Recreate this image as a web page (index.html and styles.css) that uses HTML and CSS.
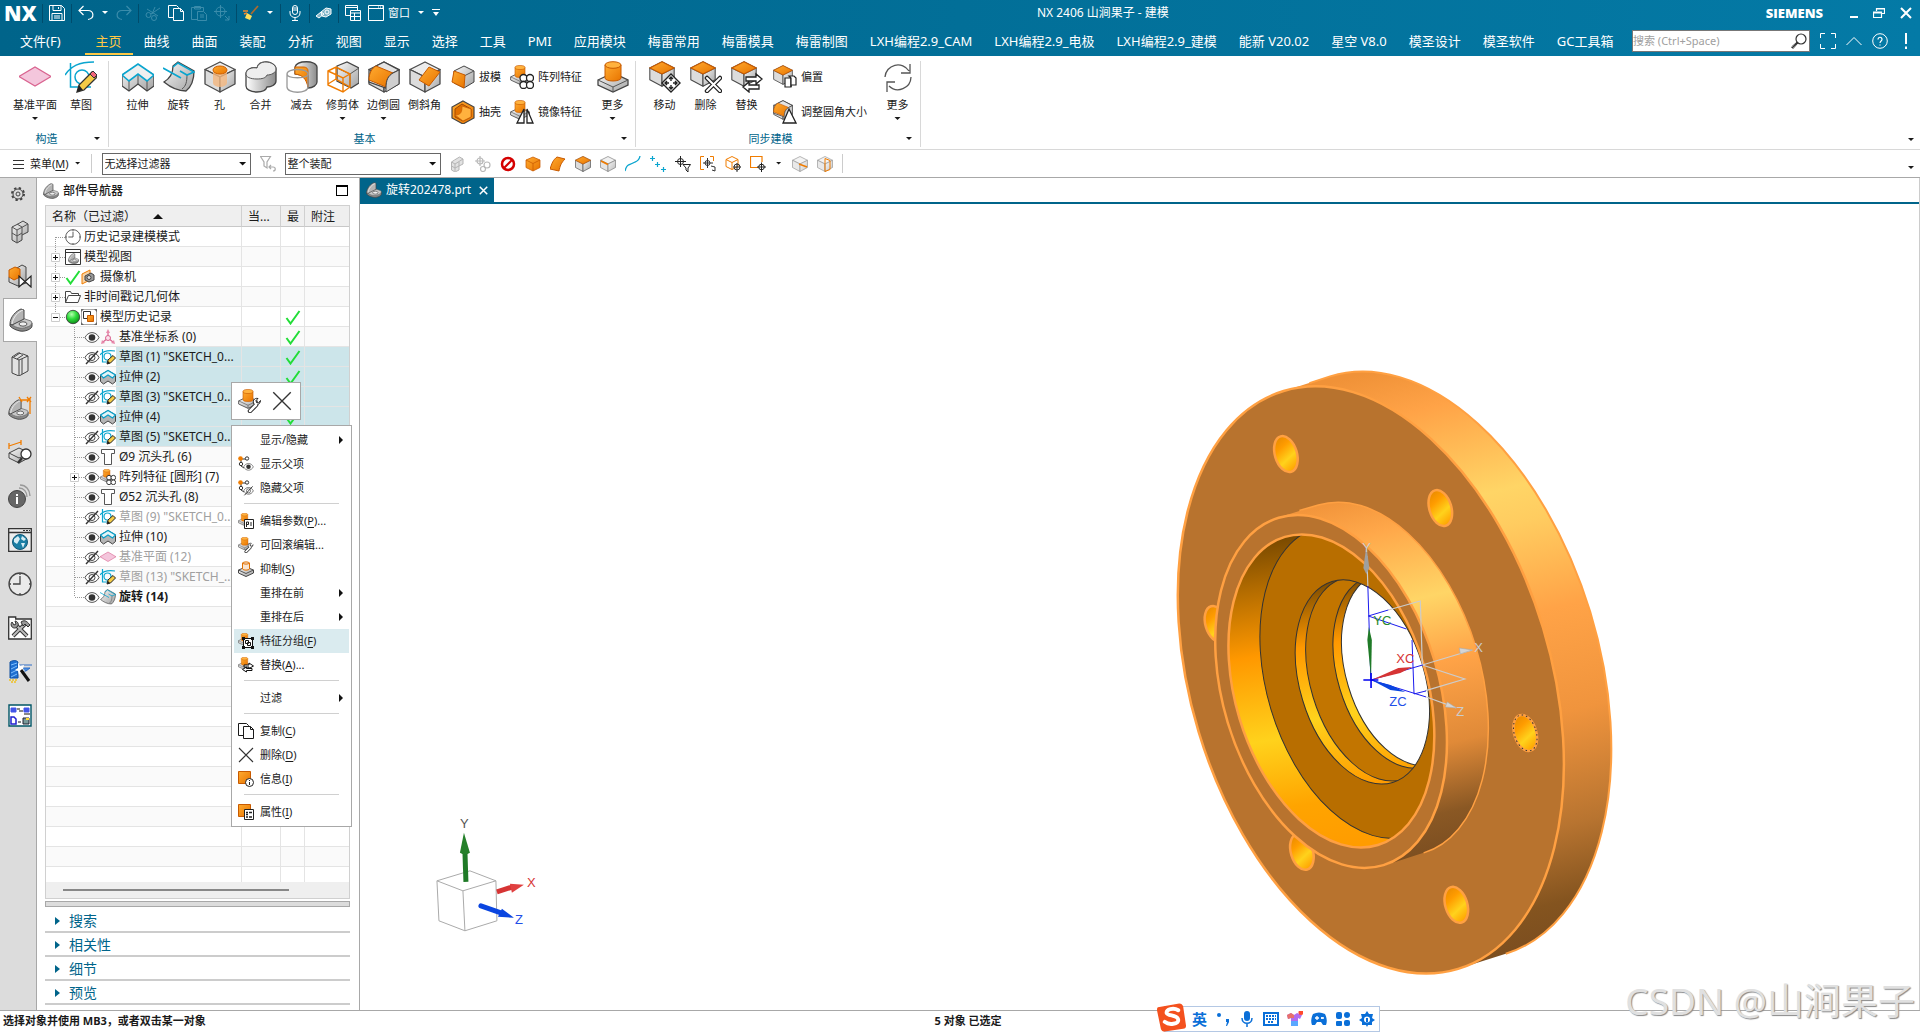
FILE: index.html
```html
<!DOCTYPE html>
<html lang="zh-CN">
<head>
<meta charset="UTF-8">
<meta name="viewport" content="width=device-width, initial-scale=1.0">
<title>NX 2406 山涧果子 - 建模</title>
<link rel="stylesheet" href="styles.css">
</head>
<body>

<!-- icon sprite -->
<svg class="sprite" aria-hidden="true">
  <defs>
    <linearGradient id="og" x1="0" y1="0" x2="1" y2="1"><stop offset="0" stop-color="#ffab30"/><stop offset="1" stop-color="#e87400"/></linearGradient>
    <linearGradient id="gg" x1="0" y1="0" x2="1" y2="1"><stop offset="0" stop-color="#f8f8f8"/><stop offset="1" stop-color="#a2a2a2"/></linearGradient>
    <linearGradient id="gd" x1="0" y1="0" x2="1" y2="0"><stop offset="0" stop-color="#fff"/><stop offset="1" stop-color="#8c8c8c"/></linearGradient>
    <radialGradient id="ball" cx=".4" cy=".3" r=".7"><stop offset="0" stop-color="#b6ffb0"/><stop offset=".5" stop-color="#2fdc3c"/><stop offset="1" stop-color="#10901c"/></radialGradient>

    <!-- basic bodies -->
    <symbol id="cube" viewBox="0 0 32 32"><g stroke="#4a4a4a" stroke-width="1.3" stroke-linejoin="round"><path d="M16 1l15 7.5L16 16 1 8.500z" fill="#ececec"/><path d="M1 8.500L16 16v15L1 23z" fill="#dcdcdc"/><path d="M31 8.500L16 16v15l15-8z" fill="url(#gg)"/></g></symbol>
    <symbol id="cube-top" viewBox="0 0 32 32"><use href="#cube"/><path d="M16 1l15 7.500L16 16 1 8.500z" fill="url(#og)" stroke="#c85a00" stroke-width="1.300"/></symbol>
    <symbol id="cube-orange" viewBox="0 0 32 32"><path d="M16 2l14 6v15l-14 7-14-7V8z" fill="url(#og)" stroke="#c85a00" stroke-width="1.5"/><path d="M2 8l14 7 14-7M16 15v15" fill="none" stroke="#c85a00" stroke-width="1.500"/></symbol>
    <symbol id="boss" viewBox="0 0 32 32"><path d="M1 19l15-7 15 7v5l-15 7-15-7z" fill="url(#gg)" stroke="#444" stroke-width="1.300"/><path d="M1 19l15 7 15-7M16 26v5" fill="none" stroke="#555"/><path d="M8 4v13a8 3 0 0 0 16 0V4z" fill="url(#og)" stroke="#c85a00"/><ellipse cx="16" cy="4" rx="8" ry="3.300" fill="#ffb23e" stroke="#c85a00"/></symbol>
    <symbol id="bracket" viewBox="0 0 24 24"><path d="M1 16l12-5 10 4v3c0 3-7 6-12 5-4-1-7-2-10-5z" fill="#8a8a8a" stroke="#444"/><path d="M1 15l12-5 9 3c2 2 0 5-4 6-6 3-13 0-17-4z" fill="#c9c9c9" stroke="#666" stroke-width=".8"/><path d="M1 16C1 9 7 3 12 1l3 1v9L3 17z" fill="#b4b4b4" stroke="#444"/><path d="M3 16C4 9 9 4 14 2" fill="none" stroke="#eee"/><ellipse cx="14" cy="16" rx="4" ry="2.200" fill="#eee" stroke="#555"/></symbol>

    <!-- ribbon -->
    <symbol id="plane" viewBox="0 0 32 32"><path d="M0 15.500L16 6l16 9.500L16 25z" fill="#f4c6dc" stroke="#d9638f" stroke-width="1.200"/></symbol>
    <symbol id="sketch" viewBox="0 0 32 32"><g fill="none" stroke="#0aa5cf" stroke-width="1.500"><path d="M0 14C6 5 14 1 29 1M5.500 2v24H26"/><circle cx="17" cy="16" r="7"/></g><path d="M12 31l2-7L27 11l5 5-13 13z" fill="#f5cb45" stroke="#333" stroke-width="1.300"/><path d="M25 13l3-3 4 4-3 3z" fill="#f3667a" stroke="#333"/><path d="M12 31l2-7 4 5z" fill="#222"/></symbol>
    <symbol id="sketch-s" viewBox="0 0 16 16"><path d="M0 6C3 2 8 1 15 2M2.500 0v13H8" fill="none" stroke="#0aa5cf" stroke-width="1.200"/><circle cx="7.500" cy="7.500" r="3.500" fill="none" stroke="#0aa5cf" stroke-width="1.200"/><path d="M7 15l1-4 5-4.500 2.500 2.500-5 5z" fill="#f5cb45" stroke="#222"/><path d="M7 15l1-3 2 2z" fill="#222"/></symbol>
    <symbol id="extrude" viewBox="0 0 32 32"><path d="M0 14L16 4l16 10v11l-7 5-9-7-9 7-7-5z" fill="url(#gg)" stroke="#444" stroke-width="1.300"/><path d="M7 20v9M16 13v10M25 20v9" stroke="#555"/><path d="M0 14L16 3l16 11-7 6-9-7-9 7z" fill="#efefef" stroke="#0aa5cf" stroke-width="1.600"/></symbol>
    <symbol id="extrude-s" viewBox="0 0 16 16"><path d="M.5 6L8 1.500 15.500 6v6.500l-3 2.500L8 12l-4.500 3-3-2.500z" fill="#b5b5b5" stroke="#444"/><path d="M.5 6L8 1.500 15.500 6l-3 3L8 6 3.500 9z" fill="#e4f4f8" stroke="#0a9fc8" stroke-width="1.200"/></symbol>
    <symbol id="revolve" viewBox="0 0 32 32"><path d="M10 5l5-4 16 9c0 9-3 16-8 20-8 0-16-4-22-9 5-3 9-8 9-16z" fill="url(#gg)" stroke="#444" stroke-width="1.300"/><path d="M24 13c0 8-1 12-5 15" fill="none" stroke="#555"/><path d="M0 7l18 10M10 6l5-4 16 9-7 3-7-4" fill="none" stroke="#0aa5cf" stroke-width="1.600"/></symbol>
    <symbol id="hole" viewBox="0 0 32 32"><use href="#cube"/><path d="M9 9v13a7 4 0 0 0 14 0V9z" fill="#f4b67e" fill-opacity=".8"/><ellipse cx="16" cy="9" rx="7" ry="4" fill="url(#og)" stroke="#d06000"/></symbol>
    <symbol id="unite" viewBox="0 0 32 32"><path d="M1 13c0-5 6-7 11-6 1-4 4-6 9-6s10 3 10 7v12c0 4-5 6-9 6-1 3-5 5-10 5-7 0-11-3-11-6z" fill="url(#gd)" stroke="#444" stroke-width="1.300"/><path d="M1 13c0-5 6-7 11-6 1-4 4-6 9-6s10 3 10 7-5 6-9 6c-1 3-5 4-10 4-7 0-11-2-11-5z" fill="#eee" stroke="#555"/></symbol>
    <symbol id="subtract" viewBox="0 0 32 32"><path d="M9 6c2-7 21-7 22 0v15c0 3-4 6-9 6V15L9 13z" fill="url(#gd)" stroke="#444" stroke-width="1.300"/><path d="M9 6h8c4 0 5 2 5 4v16c-2-8-5-12-13-13z" fill="url(#og)" stroke="#d06000"/><path d="M1 13c0-6 21-6 21 0v13c0 7-21 7-21 0zc0 5 21 5 21 0" fill="none" stroke="#999" stroke-width="1.300"/></symbol>
    <symbol id="trim" viewBox="0 0 32 32"><path d="M10 5l10-4 12 6v15l-8 5-14-7z" fill="url(#gg)" stroke="#444" stroke-width="1.300"/><path d="M10 7l13 6 9-6M23 13v14" fill="none" stroke="#555"/><path d="M1 10l8-4 14 7v13l-7 5-15-7zl15 7 7-4M16 17v14M9 6v12l14 8M9 18l-8 5" fill="none" stroke="#f07c00" stroke-width="1.400"/></symbol>
    <symbol id="blend" viewBox="0 0 32 32"><use href="#cube"/><path d="M1 21c0-9 3-14 7-16l8-4 15 8-6 3c-6 3-7 8-7 15z" fill="#e4e4e4" stroke="#444" stroke-width="1.300"/><path d="M1 19C1 12 4 7 8 5l17 7c-5 3-7 7-7 14z" fill="url(#og)" stroke="#c85a00"/><path d="M18 27c0-8 2-12 7-15l6-3v14l-13 8z" fill="#cfcfcf" stroke="#444"/></symbol>
    <symbol id="chamfer" viewBox="0 0 32 32"><use href="#cube"/><path d="M20 6l11 5-11 14-10-6z" fill="url(#og)" stroke="#c85a00"/></symbol>
    <symbol id="draft" viewBox="0 0 24 24"><path d="M3 6l10-5 10 5v11l-10 6-10-5z" fill="url(#gg)" stroke="#444"/><path d="M13 11l10-5" stroke="#555"/><path d="M3 6l11 4-1 13-12-6z" fill="url(#og)" stroke="#c85a00"/></symbol>
    <symbol id="shell" viewBox="0 0 24 24"><path d="M12 1l11 6v11l-11 6-11-6V7z" fill="url(#og)" stroke="#444" stroke-width="1.200"/><path d="M4 9l7-5 9 5v8l-8 4-8-4z" fill="#e07000" stroke="#a04a00"/><path d="M4 15c6 0 7-3 7-9l9 3v8l-8 4z" fill="#ffb23e" stroke="#c85a00" stroke-width=".7"/></symbol>
    <symbol id="pattern" viewBox="0 0 24 24"><use href="#boss" x="0" y="0" width="20" height="20"/><g fill="#fff" stroke="#222" stroke-width="1.300"><circle cx="13.500" cy="13" r="3.500"/><circle cx="20" cy="13" r="3.500"/><circle cx="13.500" cy="20" r="3.500"/><circle cx="20" cy="20" r="3.500"/></g></symbol>
    <symbol id="mirror" viewBox="0 0 24 24"><use href="#boss" x="0" y="0" width="20" height="20"/><path d="M14 9v14H7zM17 9v14h6z" fill="#fff" stroke="#222" stroke-width="1.300"/></symbol>
    <symbol id="move" viewBox="0 0 32 32"><use href="#cube-top" width="26" height="26"/><path d="M22 13l9 9-9 9-9-9z" fill="#fff" stroke="#222" stroke-width="1.400"/><path d="M22 16v4M22 24v4M16 22h4M24 22h4M20 18l2-2 2 2M20 26l2 2 2-2M18 20l-2 2 2 2M26 20l2 2-2 2" fill="none" stroke="#222" stroke-width="1.400"/></symbol>
    <symbol id="delete" viewBox="0 0 32 32"><use href="#cube-top" width="26" height="26"/><path d="M17 17l13 13M30 17L17 30" stroke="#222" stroke-width="4.500" stroke-linecap="round"/><path d="M17 17l13 13M30 17L17 30" stroke="#fff" stroke-width="2" stroke-linecap="round"/></symbol>
    <symbol id="replace" viewBox="0 0 32 32"><use href="#cube-top" width="26" height="26"/><path d="M15 16h10v-3l6 5-6 5v-3H15zM28 24H18v-3l-6 5 6 5v-3h10z" fill="#fff" stroke="#222" stroke-width="1.300"/></symbol>
    <symbol id="offset" viewBox="0 0 24 24"><use href="#cube-top" width="20" height="20"/><path d="M12 13h6v9h-6z" fill="#fff" stroke="#222" stroke-width="1.200"/><path d="M18 22V13l-2-2h5l2 2v7h-5" fill="#fff" stroke="#222" stroke-width="1.200"/></symbol>
    <symbol id="resize" viewBox="0 0 24 24"><use href="#blend" width="20" height="20"/><path d="M16 9l7 14H10z" fill="#fff" stroke="#222" stroke-width="1.300"/></symbol>
    <symbol id="refresh" viewBox="0 0 32 32"><path d="M3 16A13 13 0 0 1 27 10M29 16A13 13 0 0 1 7 25M28 3v9h-9M5 31v-10h8" fill="none" stroke="#555" stroke-width="1.300"/></symbol>

    <!-- title bar -->
    <symbol id="save" viewBox="0 0 16 16"><path d="M.5.5h12l3 3v12H.5zM4 .5v5h8v-5M9.500 2v2M3 15.500v-7h10v7M5 11h6M5 13h6" fill="none" stroke="currentColor"/></symbol>
    <symbol id="undo" viewBox="0 0 16 16"><path d="M5.500 1L1 5.500 5.500 10M1 5.500h9c6 0 7 8 0 9" fill="none" stroke="currentColor" stroke-width="1.200"/></symbol>
    <symbol id="cut" viewBox="0 0 16 16"><g fill="none" stroke="currentColor"><path d="M2 4l11 7M15 3L6 9M10 2L7 9"/><circle cx="3.500" cy="10" r="2.500"/><circle cx="9" cy="13" r="2.500"/></g></symbol>
    <symbol id="copy" viewBox="0 0 16 16"><path d="M5.500 12.500h-5V.5h8l2 2v1M5.500 3.500h7l3 3v9h-10zM12.500 3.500v3h3" fill="none" stroke="currentColor"/></symbol>
    <symbol id="paste" viewBox="0 0 16 16"><path d="M6 14.500H.5v-12h12V6M3.500 4V1.500h6V4zM6.500 6.500h6l3 3v6h-9zM9 10h4M9 12h4" fill="none" stroke="currentColor"/></symbol>
    <symbol id="target" viewBox="0 0 16 16"><path d="M6.500 0v13M0 6.500h13M11 11l4 4M15 11v4h-4" fill="none" stroke="currentColor"/><circle cx="6.500" cy="6.500" r="4.500" fill="none" stroke="currentColor"/></symbol>
    <symbol id="brush" viewBox="0 0 16 16"><path d="M15 1L8 9" stroke="#b06a2c" stroke-width="1.600"/><path d="M4 8l5 3-2 4-5-2z" fill="#ffdf5a"/><path d="M0 6h5M1 9l3-1" stroke="#f28a2e" stroke-width="1.500"/></symbol>
    <symbol id="mic" viewBox="0 0 16 16"><rect x="5.500" y=".5" width="5" height="9" rx="2.500" fill="none" stroke="currentColor"/><path d="M3 6v2c0 6 10 6 10 0V6M8 12.500V15M5 15.500h6M6 3h4M6 5h4" fill="none" stroke="currentColor"/></symbol>
    <symbol id="touch" viewBox="0 0 16 16"><path d="M0 11l5-4 3 2-5 4zM5 7l5-4 5 1v5l-5 3-4-1z" fill="#fff" fill-opacity=".5" stroke="#fff"/><circle cx="11" cy="7" r="2" fill="none" stroke="#fff"/></symbol>
    <symbol id="windows" viewBox="0 0 16 16"><path d="M5 10.500H.5V.5h12V5M.5 2.500h12M5.500 5.500h10v10h-10zM5.500 8h10M9.500 8v7M5.500 11.500h10" fill="none" stroke="currentColor"/></symbol>
    <symbol id="window" viewBox="0 0 16 16"><path d="M.5.5h15v15H.5zM.5 3.500h15" fill="none" stroke="currentColor"/><path d="M10 2h1M12 2h1M14 2h1" stroke="currentColor"/></symbol>
    <symbol id="expand" viewBox="0 0 16 16"><path d="M.5 5V.5H5M11 .5h4.500V5M15.500 11v4.500H11M5 15.500H.5V11" fill="none" stroke="currentColor"/></symbol>
    <symbol id="up" viewBox="0 0 16 16"><path d="M.5 12L8 4.500l7.500 7.500" fill="none" stroke="currentColor"/></symbol>
    <symbol id="help" viewBox="0 0 16 16"><circle cx="8" cy="8" r="7.300" fill="none" stroke="currentColor"/><path d="M6 6.500c0-3 4-3 4 0 0 1.500-2 1.500-2 3.500M8 11.500v1" fill="none" stroke="currentColor" stroke-width="1.200"/></symbol>
    <symbol id="alert" viewBox="0 0 16 16"><path d="M7 0h2v11H7zM7 13.500h2v2.500H7z" fill="currentColor"/></symbol>
    <symbol id="lens" viewBox="0 0 16 16"><circle cx="10" cy="6" r="5" fill="none" stroke="#333" stroke-width="1.200"/><path d="M6.500 9.500L1 15M7 10l-5 5.500-1.500-1.500L6 9" fill="none" stroke="#333"/></symbol>
    <symbol id="restore" viewBox="0 0 12 12"><path d="M3.500 4V1.500h8v5H9M.5 5h8v5.500h-8zM.5 6h8M3.500 2h8" fill="none" stroke="currentColor" stroke-width="1.200"/></symbol>
    <symbol id="close" viewBox="0 0 12 12"><path d="M1 1l10 10M11 1L1 11" stroke="currentColor" stroke-width="2"/></symbol>

    <!-- selection bar -->
    <symbol id="burger" viewBox="0 0 12 12"><path d="M0 2.500h11M0 6.500h11M0 10.500h11" stroke="#333"/></symbol>
    <symbol id="funnel" viewBox="0 0 16 16"><path d="M.5.5h10L7 6v6l-3-2V6zM9 11h4c3 0 3 4 0 4M11 9l-2 2 2 2" fill="none" stroke="#aaa" stroke-width="1.200"/></symbol>
    <symbol id="blocks" viewBox="0 0 16 16"><path d="M1.500 6l3-2 5-3 3.500 2v5l-4 2v4l-4 2-3.500-2z" fill="#e2e2e2" stroke="#b4b4b4"/><path d="M1.500 6L5 8l8-5M5 8v7M9 6v4M1.500 10L5 12l4-2" fill="none" stroke="#b4b4b4"/></symbol>
    <symbol id="link" viewBox="0 0 16 16"><g fill="none" stroke="#b8b8b8" stroke-width="1.200"><circle cx="5" cy="5" r="3"/><path d="M5 0v10M0 5h10"/><circle cx="12" cy="9" r="3"/><circle cx="8" cy="13" r="2.500"/></g></symbol>
    <symbol id="ban" viewBox="0 0 16 16"><circle cx="8" cy="8" r="6" fill="#fff" stroke="#d40000" stroke-width="2.500"/><path d="M4 12l8-8" stroke="#d40000" stroke-width="2"/></symbol>
    <symbol id="face" viewBox="0 0 16 16"><path d="M0 13C2 7 3 4 7 1l8 2c-4 4-5 7-6 12z" fill="url(#og)" stroke="#c85a00"/></symbol>
    <symbol id="edge" viewBox="0 0 16 16"><use href="#cube" opacity=".75"/><path d="M1 5l7 3.500" stroke="#f07c00" stroke-width="1.800"/></symbol>
    <symbol id="curve" viewBox="0 0 16 16"><path d="M0 15c2-8 5-6 8-8s6-1 7-7" fill="none" stroke="#0aa5cf" stroke-width="1.300"/></symbol>
    <symbol id="points" viewBox="0 0 16 16"><path d="M0 2.500h5M2.500 0v5M5 8.500h5M7.500 6v5M11 13.500h5M13.500 11v5" stroke="#0aa5cf" stroke-width="1.200"/></symbol>
    <symbol id="cross-funnel" viewBox="0 0 16 16"><path d="M5.500 0v11M0 5.500h11" stroke="#222"/><circle cx="5.500" cy="5.500" r="3" fill="none" stroke="#222"/><path d="M8 8.500h7.500L13 12v4l-2-2v-2z" fill="#fff" stroke="#222"/></symbol>
    <symbol id="cross-box" viewBox="0 0 16 16"><path d="M4 .5H.5v13H4M10 .5h3.500V5" fill="none" stroke="#f07c00"/><path d="M7.500 2v10M3 7h10M11 10l4 1v4l-3-1" fill="none" stroke="#333"/><circle cx="7.500" cy="7" r="2.500" fill="none" stroke="#333"/></symbol>
    <symbol id="cube-cross" viewBox="0 0 16 16"><path d="M1 3.500L7 .5l6 3v7l-6 3-6-3zl6 3 6-3M7 6.500v7" fill="none" stroke="#f07c00"/><circle cx="12" cy="11" r="3" fill="none" stroke="#333"/><path d="M12 7v9M8 11h8" stroke="#333"/></symbol>
    <symbol id="box-cross" viewBox="0 0 16 16"><path d="M12 6V.5H.5v11H8" fill="none" stroke="#f07c00" stroke-width="1.200"/><circle cx="11.500" cy="11" r="2.800" fill="none" stroke="#222"/><path d="M11.500 6.500V16M7 11h9" stroke="#222"/></symbol>
    <symbol id="cube-line" viewBox="0 0 16 16"><use href="#cube" opacity=".6"/><path d="M7 8l8 3" stroke="#f07c00" stroke-width="1.500"/></symbol>
    <symbol id="cube-cut" viewBox="0 0 16 16"><use href="#cube" opacity=".6"/><path d="M8 2.500l5 2v9l-5 2z" fill="none" stroke="#f07c00"/></symbol>

    <!-- resource bar -->
    <symbol id="gear" viewBox="0 0 24 24"><circle cx="12" cy="12" r="9" fill="none" stroke="#444" stroke-width="3" stroke-dasharray="3.500 3.570"/><circle cx="12" cy="12" r="7.500" fill="#dcdcdc" stroke="#444" stroke-width="1.500"/><circle cx="12" cy="12" r="3" fill="none" stroke="#444" stroke-width="1.500"/></symbol>
    <symbol id="asm" viewBox="0 0 24 24"><path d="M4 7l6-3 5-3 5 3v8l-6 3v5l-5 3-5-3z" fill="url(#gg)" stroke="#444"/><path d="M4 7l5 3 11-6M9 10v12M9 4l5 3v8M4 13l5 3 5-3" fill="none" stroke="#555"/></symbol>
    <symbol id="constraint" viewBox="0 0 24 24"><path d="M9 4l5-3 4 2v16l-8 3-9-4v-5z" fill="url(#gg)" stroke="#444"/><path d="M1 6l6-3 5 2v8l-6 3-5-3z" fill="url(#og)" stroke="#c85a00"/><path d="M11 12v11l12-11v11z" fill="#fff" stroke="#222" stroke-width="1.200"/></symbol>
    <symbol id="books" viewBox="0 0 24 24"><path d="M4 5l6-4h2l1 1h2l5 2v15l-9 5-7-3z" fill="#e2e2e2" stroke="#444"/><path d="M4 5l7 3 9-4M11 8v16M6 5l6-4M9 7l6-4M14 7v15" fill="none" stroke="#444"/></symbol>
    <symbol id="pmi" viewBox="0 0 24 24"><use href="#bracket" x="0" y="3" width="21" height="21"/><path d="M22 18V2M11 1l3 5M12 4l9 0M19 1l4 5M23 1l-4 5" fill="none" stroke="#f07c00" stroke-width="1.300"/></symbol>
    <symbol id="inspect" viewBox="0 0 24 24"><path d="M1 13l10-5 11 5v4l-11 6-10-5z" fill="url(#gg)" stroke="#444"/><path d="M1 13l10 5 11-5" fill="none" stroke="#444"/><path d="M1 9V3M1 6l12-4M13 5V0" stroke="#f07c00" stroke-width="1.300"/><path d="M14 18l-4 5" stroke="#333" stroke-width="2.500"/><circle cx="18" cy="14" r="5" fill="#fff" stroke="#333" stroke-width="1.300"/></symbol>
    <symbol id="info" viewBox="0 0 24 24"><circle cx="9" cy="15" r="8.500" fill="#666" stroke="#444"/><path d="M9 10v2M9 13v7" stroke="#fff" stroke-width="2"/><path d="M11 4c5 0 8 4 8 9M12 1c6 0 10 5 10 11" fill="none" stroke="#999" stroke-width="1.400"/></symbol>
    <symbol id="web" viewBox="0 0 24 24"><path d="M.7.700h22.600v22.600H.7zM.7 4.500h22.600" fill="#eee" stroke="#333" stroke-width="1.300"/><path d="M15 2.500h2M18 2.500h2M21 2.500h1" stroke="#333"/><circle cx="12" cy="14" r="7.500" fill="#1b7fa5" stroke="#145a78"/><path d="M6 11l4-3 2 3-3 5-3-2zM14 8l4 3-2 2-3-2zM13 15l4 0-2 5z" fill="#d8eef5"/></symbol>
    <symbol id="clock" viewBox="0 0 24 24"><circle cx="12" cy="12" r="11" fill="#fff" fill-opacity=".4" stroke="#444" stroke-width="1.300"/><path d="M12 4v8H5M12 1v2M12 21v2M1 12h2M21 12h2" fill="none" stroke="#444" stroke-width="1.300"/></symbol>
    <symbol id="tools" viewBox="0 0 24 24"><path d="M.7 1h7v2h15.600v20H.7z" fill="#fff" stroke="#333" stroke-width="1.300"/><path d="M5 20L17 8M8 9l11 11" stroke="#333" stroke-width="4"/><path d="M5 20L17 8M8 9l11 11" stroke="#bbb" stroke-width="2"/><path d="M4 6c-3 4 2 8 5 5s0-6-2-6l1 3-2 1z" fill="#999" stroke="#333"/><path d="M13 6c3-2 5-2 9 3l-2 2-3-3-2 2z" fill="#999" stroke="#333"/></symbol>
    <symbol id="mold" viewBox="0 0 24 24"><path d="M2 2c3-2 6-2 8 0v16H2z" fill="#1f6fd0" stroke="#0f4f9f"/><path d="M3 5l6-2M3 9l6-3M3 13l6-3M3 17l6-3" stroke="#7fc0ff"/><path d="M10 5h14M10 8h12l-4 3h-5z" fill="#4c8fe0" stroke="#2f6fc8"/><path d="M10 2l2 4 4-1-1 4 2 2-4 1-2 3-1-4-3-1 3-2z" fill="#fff"/><path d="M13 10l8 11" stroke="#111" stroke-width="3"/><path d="M1 20h9M3 22h6" stroke="#f0c020" stroke-width="1.500" stroke-dasharray="2 1"/></symbol>
    <symbol id="flow" viewBox="0 0 24 24"><path d="M1 1h22v21H1z" fill="#fff" stroke="#056" stroke-width="1.400"/><path d="M3 4h5v4H3zM16 4h5v4h-5z" fill="#4355e8" stroke="#4355e8"/><path d="M9 5h3M11 7h4M16 10h6M10 18h3" stroke="#111" stroke-width="1.200"/><path d="M3 13h3l2 2v5H3z" fill="#fff" stroke="#2020d0" stroke-width="1.500"/><path d="M15 14h6v6h-6z" fill="#7a9a9a" stroke="#223"/><path d="M18 14h3v2h-3z" fill="#fd3"/></symbol>

    <!-- tree -->
    <symbol id="br-mid" viewBox="0 0 19 20"><path d="M9.500 0v20M10 10.500h9" fill="none" stroke="#999" stroke-dasharray="1 1"/></symbol>
    <symbol id="br-start" viewBox="0 0 19 20"><path d="M9.500 10v10M10 10.500h9" fill="none" stroke="#999" stroke-dasharray="1 1"/></symbol>
    <symbol id="br-end" viewBox="0 0 19 20"><path d="M9.500 0v10M10 10.500h9" fill="none" stroke="#999" stroke-dasharray="1 1"/></symbol>
    <symbol id="br-plus" viewBox="0 0 19 20"><use href="#br-mid"/><path d="M5.500 6.500h8v8h-8z" fill="#fff" stroke="#ccc"/><path d="M7 10.500h5M9.500 8v5" stroke="#111"/></symbol>
    <symbol id="br-minus" viewBox="0 0 19 20"><use href="#br-end"/><path d="M5.500 6.500h8v8h-8z" fill="#fff" stroke="#ccc"/><path d="M7 10.500h5" stroke="#111"/></symbol>
    <symbol id="view" viewBox="0 0 16 16"><path d="M.5.500h15v15H.5zM.5 3.500h15" fill="#fff" stroke="#333"/><use href="#bracket" x="3" y="4" width="11" height="11"/></symbol>
    <symbol id="tick" viewBox="0 0 16 16"><path d="M1.500 9l4 5.500L14.500 2" fill="none" stroke="#22dd38" stroke-width="2"/></symbol>
    <symbol id="camera" viewBox="0 0 16 16"><path d="M1 5l8-4v10l-8 4z" fill="#f6d2a4" stroke="#f07c00"/><path d="M4 7l6-3 3 2v5l-5 2-4-2z" fill="#999" stroke="#444"/><circle cx="8" cy="8.500" r="2" fill="#ddd" stroke="#444"/></symbol>
    <symbol id="folder" viewBox="0 0 16 16"><path d="M.5 13.500v-11h5l1 2h7v2M.5 13.500l3-7h12l-2.500 7z" fill="#fff" stroke="#444"/></symbol>
    <symbol id="green" viewBox="0 0 16 16"><circle cx="8" cy="8" r="6.700" fill="url(#ball)" stroke="#333" stroke-width=".8"/></symbol>
    <symbol id="history" viewBox="0 0 16 16"><path d="M.5.500h15v15H.5z" fill="#fff" stroke="#aaa"/><path d="M0 0h3L0 3zM16 0v3l-3-3zM0 16v-3l3 3zM16 16h-3l3-3z" fill="#666"/><path d="M2.500 2.500h7v7h-7z" fill="#fff" stroke="#333"/><path d="M6.500 6.500h6v6h-6z" fill="url(#og)" stroke="#c85a00"/></symbol>
    <symbol id="eye" viewBox="0 0 16 16"><path d="M1 8.500c3-6.500 11-6.500 14 0-3 6.500-11 6.500-14 0z" fill="#fff" stroke="#555"/><circle cx="8" cy="8.500" r="3.300" fill="#333"/></symbol>
    <symbol id="eye-off" viewBox="0 0 16 16"><path d="M1 8.500c3-6.500 11-6.500 14 0-3 6.500-11 6.500-14 0z" fill="#fff" stroke="#444"/><circle cx="8" cy="8.500" r="3" fill="#fff" stroke="#444"/><path d="M2 15L14 2" stroke="#333" stroke-width="1.400"/></symbol>
    <symbol id="csys" viewBox="0 0 16 16"><path d="M8 2v7M8 9l-5 4M8 9l5 4" stroke="#d9638f" stroke-width="1.200"/><path d="M8 0l2 4H6zM1 15l1-4 3 3zM15 15l-1-4-3 3z" fill="#e88aac"/><circle cx="8" cy="9" r="2.500" fill="#fbe1eb" stroke="#d9638f"/></symbol>
    <symbol id="cbore" viewBox="0 0 16 16"><path d="M1.500.500h13v4h-3v11h-7v-11h-3z" fill="#fff" stroke="#555"/></symbol>

    <!-- context menu -->
    <symbol id="edit" viewBox="0 0 24 24"><use href="#boss" width="20" height="20"/><path d="M12 22l6-6" stroke="#222" stroke-width="4.500" stroke-linecap="round"/><path d="M22.500 11.500l-2 2.500-2-.5-.5-2 2-2c-4-1-6 3-4 5.500 2 2 6 1 6.500-3.500z" fill="#fff" stroke="#222"/><path d="M12 22l6-6" stroke="#fff" stroke-width="2.500" stroke-linecap="round"/></symbol>
    <symbol id="cross" viewBox="0 0 16 16"><path d="M1 1l14 14M15 1L1 15" stroke="#333" stroke-width="1.100"/></symbol>
    <symbol id="parent" viewBox="0 0 16 16"><g fill="#fff" stroke="#333"><path d="M3 3l5 0M3 3v7l3 2"/><circle cx="9" cy="2.500" r="1.700"/><circle cx="3" cy="8" r="1.700"/></g><circle cx="2.500" cy="2.500" r="2.300" fill="#f07c00"/></symbol>
    <symbol id="show-p" viewBox="0 0 16 16"><use href="#parent"/><use href="#eye" x="5" y="5" width="11" height="11"/></symbol>
    <symbol id="hide-p" viewBox="0 0 16 16"><use href="#parent"/><use href="#eye-off" x="5" y="5" width="11" height="11"/></symbol>
    <symbol id="param" viewBox="0 0 16 16"><use href="#boss" width="13" height="13"/><path d="M6.500 6.500h9v9h-9z" fill="#fff" stroke="#222"/><path d="M8.500 14V9h2v2.500h-2M12 10h2M12 12h2" fill="none" stroke="#222"/></symbol>
    <symbol id="suppress" viewBox="0 0 16 16"><path d="M.5 9L8 6l7.500 3v3L8 15.500.5 12z" fill="url(#gg)" stroke="#444"/><path d="M.5 9L8 12.500 15.500 9" fill="none" stroke="#555"/><path d="M4.500 2v6c1 1.500 6 1.500 7 0V2c-1-1.500-6-1.500-7 0zc1 1.500 6 1.500 7 0" fill="#f8e4d0" stroke="#e07000"/></symbol>
    <symbol id="group" viewBox="0 0 16 16"><use href="#boss" width="13" height="13"/><path d="M5.500 5.500h9v9h-9z" fill="#fff" stroke="#111"/><path d="M7.500 7.500h3v3h-3zM9.500 9.500h3v3h-3z" fill="none" stroke="#111"/><path d="M4 4h3v3H4zM13 4h3v3h-3zM4 13h3v3H4zM13 13h3v3h-3z" fill="#111"/></symbol>
    <symbol id="swap" viewBox="0 0 16 16"><use href="#boss" width="13" height="13"/><path d="M6 8h5V6l4.500 3-4.500 2.500V10H6zM14 13.500H8.500V15L4.500 12.500l4-2.500v1.500H14z" fill="#fff" stroke="#111"/></symbol>
    <symbol id="sheet-info" viewBox="0 0 16 16"><path d="M.5.500h12v12H.5z" fill="url(#og)" stroke="#c85a00"/><circle cx="11.500" cy="11.500" r="4" fill="#fff" stroke="#222"/><path d="M11.500 9v1M11.500 11v3" stroke="#222"/></symbol>
    <symbol id="sheet-list" viewBox="0 0 16 16"><path d="M.5.500h12v12H.5z" fill="url(#og)" stroke="#c85a00"/><path d="M6.500 5.500h9v10h-9z" fill="#fff" stroke="#222"/><path d="M8 8.500h2M11 8.500h3M8 10.500h2M8 13h2M11 13h3" stroke="#222" stroke-width="1.400"/></symbol>
  </defs>
</svg>

<header class="top">
  <div class="titlebar">
    <div class="quick">
      <strong class="logo">NX</strong>
      <i class="sep"></i>
      <button aria-label="保存"><svg><use href="#save"/></svg></button>
      <i class="sep"></i>
      <button aria-label="撤消"><svg><use href="#undo"/></svg></button>
      <i class="caret"></i>
      <button class="off flip" aria-label="重做"><svg><use href="#undo"/></svg></button>
      <i class="sep"></i>
      <button class="off" aria-label="剪切"><svg><use href="#cut"/></svg></button>
      <button aria-label="复制"><svg><use href="#copy"/></svg></button>
      <button class="off" aria-label="粘贴"><svg><use href="#paste"/></svg></button>
      <button class="off" aria-label="定位"><svg><use href="#target"/></svg></button>
      <i class="sep"></i>
      <button aria-label="命令"><svg><use href="#brush"/></svg></button>
      <i class="caret"></i>
      <i class="sep"></i>
      <button aria-label="语音"><svg><use href="#mic"/></svg></button>
      <i class="sep"></i>
      <button aria-label="触控"><svg><use href="#touch"/></svg></button>
      <i class="sep"></i>
      <button aria-label="切换窗口"><svg><use href="#windows"/></svg></button>
      <button class="win"><svg><use href="#window"/></svg>窗口</button>
      <i class="caret"></i>
      <i class="caret bar"></i>
    </div>
    <div class="title">NX 2406 山涧果子 - 建模</div>
    <div class="winctl">
      <b class="brand">SIEMENS</b>
      <button class="min" aria-label="最小化"></button>
      <button aria-label="还原"><svg><use href="#restore"/></svg></button>
      <button aria-label="关闭"><svg><use href="#close"/></svg></button>
    </div>
  </div>

  <nav class="tabs">
    <a href="#" class="file">文件(F)</a>
    <a href="#" class="on">主页</a>
    <a href="#">曲线</a>
    <a href="#">曲面</a>
    <a href="#">装配</a>
    <a href="#">分析</a>
    <a href="#">视图</a>
    <a href="#">显示</a>
    <a href="#">选择</a>
    <a href="#">工具</a>
    <a href="#">PMI</a>
    <a href="#">应用模块</a>
    <a href="#">梅雷常用</a>
    <a href="#">梅雷模具</a>
    <a href="#">梅雷制图</a>
    <a href="#">LXH编程2.9_CAM</a>
    <a href="#">LXH编程2.9_电极</a>
    <a href="#">LXH编程2.9_建模</a>
    <a href="#">能新 V20.02</a>
    <a href="#">星空 V8.0</a>
    <a href="#">模圣设计</a>
    <a href="#">模圣软件</a>
    <a href="#">GC工具箱</a>
    <div class="search">
      <input type="text" placeholder="搜索 (Ctrl+Space)" aria-label="搜索">
      <svg><use href="#lens"/></svg>
    </div>
    <div class="tabtools">
      <button aria-label="全屏"><svg><use href="#expand"/></svg></button>
      <button aria-label="最小化功能区"><svg><use href="#up"/></svg></button>
      <button aria-label="帮助"><svg><use href="#help"/></svg></button>
      <button aria-label="提醒"><svg><use href="#alert"/></svg></button>
    </div>
  </nav>
</header>

<section class="ribbon">
  <div class="group datum">
    <div class="tools">
      <button class="big wide"><svg><use href="#plane"/></svg>基准平面<i class="caret"></i></button>
      <button class="big slim"><svg><use href="#sketch"/></svg>草图</button>
    </div>
    <div class="foot"><span>构造</span><i class="caret"></i></div>
  </div>
  <div class="group">
    <div class="tools">
      <button class="big"><svg><use href="#extrude"/></svg>拉伸</button>
      <button class="big"><svg><use href="#revolve"/></svg>旋转</button>
      <button class="big"><svg><use href="#hole"/></svg>孔</button>
      <button class="big"><svg><use href="#unite"/></svg>合并</button>
      <button class="big"><svg><use href="#subtract"/></svg>减去</button>
      <button class="big"><svg><use href="#trim"/></svg>修剪体<i class="caret"></i></button>
      <button class="big"><svg><use href="#blend"/></svg>边倒圆<i class="caret"></i></button>
      <button class="big"><svg><use href="#chamfer"/></svg>倒斜角</button>
      <div class="stack">
        <button><svg><use href="#draft"/></svg>拔模</button>
        <button><svg><use href="#shell"/></svg>抽壳</button>
      </div>
      <div class="stack">
        <button><svg><use href="#pattern"/></svg>阵列特征</button>
        <button><svg><use href="#mirror"/></svg>镜像特征</button>
      </div>
      <button class="big more"><svg><use href="#boss"/></svg>更多<i class="caret"></i></button>
    </div>
    <div class="foot"><span>基本</span><i class="caret"></i></div>
  </div>
  <div class="group">
    <div class="tools">
      <button class="big"><svg><use href="#move"/></svg>移动</button>
      <button class="big"><svg><use href="#delete"/></svg>删除</button>
      <button class="big"><svg><use href="#replace"/></svg>替换</button>
      <div class="stack">
        <button><svg><use href="#offset"/></svg>偏置</button>
        <button><svg><use href="#resize"/></svg>调整圆角大小</button>
      </div>
      <button class="big more"><svg><use href="#refresh"/></svg>更多<i class="caret"></i></button>
    </div>
    <div class="foot"><span>同步建模</span><i class="caret"></i></div>
  </div>
  <i class="caret last"></i>
</section>

<section class="selbar">
  <button class="menubtn"><svg><use href="#burger"/></svg>菜单(<u>M</u>)<i class="caret"></i></button>
  <i class="sep"></i>
  <label class="combo type"><select aria-label="类型过滤器"><option>无选择过滤器</option></select></label>
  <button aria-label="重置过滤器"><svg><use href="#funnel"/></svg></button>
  <label class="combo scope"><select aria-label="选择范围"><option>整个装配</option></select></label>
  <button aria-label="组件"><svg><use href="#blocks"/></svg></button>
  <button aria-label="关联"><svg><use href="#link"/></svg></button>
  <button aria-label="禁止"><svg><use href="#ban"/></svg></button>
  <button aria-label="体"><svg><use href="#cube-orange"/></svg></button>
  <button aria-label="片体"><svg><use href="#face"/></svg></button>
  <button aria-label="面"><svg><use href="#cube-top"/></svg></button>
  <button aria-label="边"><svg><use href="#edge"/></svg></button>
  <button aria-label="曲线"><svg><use href="#curve"/></svg></button>
  <button aria-label="点"><svg><use href="#points"/></svg></button>
  <button aria-label="捕捉过滤"><svg><use href="#cross-funnel"/></svg></button>
  <button aria-label="框选"><svg><use href="#cross-box"/></svg></button>
  <button aria-label="选择体"><svg><use href="#cube-cross"/></svg></button>
  <button aria-label="矩形选择"><svg><use href="#box-cross"/></svg></button>
  <i class="caret"></i>
  <button aria-label="着色"><svg><use href="#cube-line"/></svg></button>
  <button aria-label="剖切"><svg><use href="#cube-cut"/></svg></button>
  <i class="sep"></i>
  <i class="caret last"></i>
</section>

<main class="workspace">
  <aside class="rail">
    <button class="gear" aria-label="设置"><svg><use href="#gear"/></svg></button>
    <button aria-label="装配导航器"><svg><use href="#asm"/></svg></button>
    <button aria-label="约束导航器"><svg><use href="#constraint"/></svg></button>
    <button class="on" aria-label="部件导航器"><svg><use href="#bracket"/></svg></button>
    <button aria-label="重用库"><svg><use href="#books"/></svg></button>
    <button aria-label="PMI"><svg><use href="#pmi"/></svg></button>
    <button aria-label="检查"><svg><use href="#inspect"/></svg></button>
    <button aria-label="信息"><svg><use href="#info"/></svg></button>
    <button aria-label="浏览器"><svg><use href="#web"/></svg></button>
    <button aria-label="历史记录"><svg><use href="#clock"/></svg></button>
    <button aria-label="工具"><svg><use href="#tools"/></svg></button>
    <button aria-label="模具"><svg><use href="#mold"/></svg></button>
    <button aria-label="流程"><svg><use href="#flow"/></svg></button>
  </aside>

  <section class="navigator">
    <div class="navhead">
      <svg><use href="#bracket"/></svg>
      <h2>部件导航器</h2>
      <button aria-label="最大化"></button>
    </div>
    <div class="treebox">
      <table class="tree">
        <colgroup><col class="c-name"><col class="c-cur"><col class="c-new"><col></colgroup>
        <thead>
          <tr><th><span>名称（已过滤）</span><i class="asc"></i></th><th>当...</th><th>最</th><th>附注</th></tr>
        </thead>
        <tbody>
          <tr><td><div class="node"><svg class="br"><use href="#br-start"/></svg><svg><use href="#clock"/></svg><span>历史记录建模模式</span></div></td><td></td><td></td><td></td></tr>
          <tr><td><div class="node"><svg class="br"><use href="#br-plus"/></svg><svg><use href="#view"/></svg><span>模型视图</span></div></td><td></td><td></td><td></td></tr>
          <tr><td><div class="node"><svg class="br"><use href="#br-plus"/></svg><svg><use href="#tick"/></svg><svg><use href="#camera"/></svg><span>摄像机</span></div></td><td></td><td></td><td></td></tr>
          <tr><td><div class="node"><svg class="br"><use href="#br-plus"/></svg><svg><use href="#folder"/></svg><span>非时间戳记几何体</span></div></td><td></td><td></td><td></td></tr>
          <tr><td><div class="node"><svg class="br"><use href="#br-minus"/></svg><svg><use href="#green"/></svg><svg><use href="#history"/></svg><span>模型历史记录</span></div></td><td></td><td><svg><use href="#tick"/></svg></td><td></td></tr>
          <tr><td><div class="node sub"><svg class="br"><use href="#br-mid"/></svg><svg><use href="#eye"/></svg><svg><use href="#csys"/></svg><span>基准坐标系 (0)</span></div></td><td></td><td><svg><use href="#tick"/></svg></td><td></td></tr>
          <tr class="sel"><td><div class="node sub"><svg class="br"><use href="#br-mid"/></svg><svg><use href="#eye-off"/></svg><svg><use href="#sketch-s"/></svg><span>草图 (1) "SKETCH_0...</span></div></td><td></td><td><svg><use href="#tick"/></svg></td><td></td></tr>
          <tr class="sel"><td><div class="node sub"><svg class="br"><use href="#br-mid"/></svg><svg><use href="#eye"/></svg><svg><use href="#extrude-s"/></svg><span>拉伸 (2)</span></div></td><td></td><td><svg><use href="#tick"/></svg></td><td></td></tr>
          <tr class="sel"><td><div class="node sub"><svg class="br"><use href="#br-mid"/></svg><svg><use href="#eye-off"/></svg><svg><use href="#sketch-s"/></svg><span>草图 (3) "SKETCH_0...</span></div></td><td></td><td><svg><use href="#tick"/></svg></td><td></td></tr>
          <tr class="sel"><td><div class="node sub"><svg class="br"><use href="#br-mid"/></svg><svg><use href="#eye"/></svg><svg><use href="#extrude-s"/></svg><span>拉伸 (4)</span></div></td><td></td><td><svg><use href="#tick"/></svg></td><td></td></tr>
          <tr class="sel"><td><div class="node sub"><svg class="br"><use href="#br-mid"/></svg><svg><use href="#eye-off"/></svg><svg><use href="#sketch-s"/></svg><span>草图 (5) "SKETCH_0...</span></div></td><td></td><td><svg><use href="#tick"/></svg></td><td></td></tr>
          <tr><td><div class="node sub"><svg class="br"><use href="#br-mid"/></svg><svg><use href="#eye"/></svg><svg><use href="#cbore"/></svg><span>Ø9 沉头孔 (6)</span></div></td><td></td><td></td><td></td></tr>
          <tr><td><div class="node sub"><svg class="br"><use href="#br-plus"/></svg><svg><use href="#eye"/></svg><svg><use href="#pattern"/></svg><span>阵列特征 [圆形] (7)</span></div></td><td></td><td></td><td></td></tr>
          <tr><td><div class="node sub"><svg class="br"><use href="#br-mid"/></svg><svg><use href="#eye"/></svg><svg><use href="#cbore"/></svg><span>Ø52 沉头孔 (8)</span></div></td><td></td><td></td><td></td></tr>
          <tr class="dim"><td><div class="node sub"><svg class="br"><use href="#br-mid"/></svg><svg><use href="#eye-off"/></svg><svg><use href="#sketch-s"/></svg><span>草图 (9) "SKETCH_0...</span></div></td><td></td><td></td><td></td></tr>
          <tr><td><div class="node sub"><svg class="br"><use href="#br-mid"/></svg><svg><use href="#eye"/></svg><svg><use href="#extrude-s"/></svg><span>拉伸 (10)</span></div></td><td></td><td></td><td></td></tr>
          <tr class="dim"><td><div class="node sub"><svg class="br"><use href="#br-mid"/></svg><svg><use href="#eye-off"/></svg><svg><use href="#plane"/></svg><span>基准平面 (12)</span></div></td><td></td><td></td><td></td></tr>
          <tr class="dim"><td><div class="node sub"><svg class="br"><use href="#br-mid"/></svg><svg><use href="#eye-off"/></svg><svg><use href="#sketch-s"/></svg><span>草图 (13) "SKETCH_...</span></div></td><td></td><td></td><td></td></tr>
          <tr class="cur"><td><div class="node sub"><svg class="br"><use href="#br-end"/></svg><svg><use href="#eye"/></svg><svg><use href="#revolve"/></svg><span>旋转 (14)</span></div></td><td></td><td></td><td></td></tr>
          <tr><td></td><td></td><td></td><td></td></tr>
          <tr><td></td><td></td><td></td><td></td></tr>
          <tr><td></td><td></td><td></td><td></td></tr>
          <tr><td></td><td></td><td></td><td></td></tr>
          <tr><td></td><td></td><td></td><td></td></tr>
          <tr><td></td><td></td><td></td><td></td></tr>
          <tr><td></td><td></td><td></td><td></td></tr>
          <tr><td></td><td></td><td></td><td></td></tr>
          <tr><td></td><td></td><td></td><td></td></tr>
          <tr><td></td><td></td><td></td><td></td></tr>
          <tr><td></td><td></td><td></td><td></td></tr>
          <tr><td></td><td></td><td></td><td></td></tr>
          <tr><td></td><td></td><td></td><td></td></tr>
          <tr><td></td><td></td><td></td><td></td></tr>
        </tbody>
      </table>
    </div>
    <div class="hscroll"><div class="thumb"></div></div>
    <div class="splitter"></div>
    <button class="fold">搜索</button>
    <button class="fold">相关性</button>
    <button class="fold">细节</button>
    <button class="fold">预览</button>
  </section>

  <section class="stage">
    <div class="doctabs">
      <a href="#" class="doctab"><svg class="part"><use href="#bracket"/></svg>旋转202478.prt<svg class="x"><use href="#close"/></svg></a>
    </div>
    <svg class="viewport" viewBox="360 204 1560 806" preserveAspectRatio="xMidYMid meet">
      <defs>
        <linearGradient id="rim" gradientUnits="userSpaceOnUse" x1="1380" y1="370" x2="1530" y2="960">
          <stop offset="0" stop-color="#f09238"/><stop offset=".08" stop-color="#ffa347"/><stop offset=".24" stop-color="#ffd566"/><stop offset=".3" stop-color="#ffcc60"/><stop offset=".45" stop-color="#ffa347"/><stop offset=".62" stop-color="#f0943d"/><stop offset=".8" stop-color="#b87430"/><stop offset=".92" stop-color="#84541f"/><stop offset="1" stop-color="#7a4d20"/>
        </linearGradient>
        <linearGradient id="neck" gradientUnits="userSpaceOnUse" x1="1345" y1="502" x2="1430" y2="862">
          <stop offset="0" stop-color="#f3963c"/><stop offset=".1" stop-color="#ffa84a"/><stop offset=".3" stop-color="#ffd566"/><stop offset=".48" stop-color="#ffa347"/><stop offset=".7" stop-color="#e08a38"/><stop offset=".88" stop-color="#8a5824"/><stop offset="1" stop-color="#7a4d20"/>
        </linearGradient>
        <linearGradient id="bore" gradientUnits="userSpaceOnUse" x1="1270" y1="540" x2="1320" y2="850">
          <stop offset="0" stop-color="#7a4a00"/><stop offset=".14" stop-color="#b06a00"/><stop offset=".36" stop-color="#ff9800"/><stop offset=".63" stop-color="#ffd21c"/><stop offset=".85" stop-color="#ffa400"/><stop offset="1" stop-color="#ff9c00"/>
        </linearGradient>
        <linearGradient id="step" gradientUnits="userSpaceOnUse" x1="1330" y1="580" x2="1365" y2="784">
          <stop offset="0" stop-color="#7a4a00"/><stop offset=".3" stop-color="#ff9800"/><stop offset=".65" stop-color="#ffd21c"/><stop offset="1" stop-color="#ff9c00"/>
        </linearGradient>
        <linearGradient id="bolt" x1=".3" y1="0" x2=".6" y2="1">
          <stop offset="0" stop-color="#e88a00"/><stop offset=".3" stop-color="#ff9c00"/><stop offset=".65" stop-color="#ffd21c"/><stop offset="1" stop-color="#ffa000"/>
        </linearGradient>
        <clipPath id="clip-bore"><ellipse rx="96" ry="161" transform="translate(1332 691) rotate(-16.800)"/></clipPath>
        <clipPath id="clip-step"><ellipse rx="62.500" ry="105" transform="translate(1363 682) rotate(-16.800)"/></clipPath>
        <clipPath id="clip-lip"><ellipse rx="59" ry="99" transform="translate(1397 672) rotate(-16.800)"/></clipPath>
      </defs>

      <!-- flange -->
      <path d="M1330.700 376.200A180 301 -16.800 0 1 1506.500 954L1459 969 1284 391z" fill="url(#rim)"/>
      <path d="M1310 383L1330.700 376.200A180 301 -16.800 0 1 1506.500 954" fill="none" stroke="#ffa042" stroke-width="2"/>
      <ellipse rx="180" ry="302" transform="translate(1371.500 680) rotate(-16.800)" fill="#b8732e" stroke="#ffa042" stroke-width="2.500"/>
      <g fill="url(#bolt)" stroke="#ffa042" stroke-width="2.500">
        <ellipse rx="11" ry="18.500" transform="translate(1286.500 454) rotate(-16.800)"/>
        <ellipse rx="11" ry="18.500" transform="translate(1441 508) rotate(-16.800)"/>
        <ellipse rx="11" ry="18.500" transform="translate(1526 733) rotate(-16.800)"/>
        <ellipse rx="11" ry="18.500" transform="translate(1457 905) rotate(-16.800)"/>
        <ellipse rx="11" ry="18.500" transform="translate(1302.500 852) rotate(-16.800)"/>
        <ellipse rx="11" ry="18.500" transform="translate(1217 624) rotate(-16.800)"/>
      </g>
      <ellipse rx="11" ry="18.500" transform="translate(1526 733) rotate(-16.800)" fill="none" stroke="#333" stroke-dasharray="1.500 3"/>

      <!-- neck -->
      <path d="M1319 505A108 179 -16.800 0 1 1424.300 853L1384.300 866 1279 517.500z" fill="url(#neck)"/>
      <path d="M1300 510.500L1319 505A108 179 -16.800 0 1 1424.300 853" fill="none" stroke="#ffa042" stroke-width="1.500"/>
      <ellipse rx="108" ry="181.500" transform="translate(1331.700 691.500) rotate(-16.800)" fill="#b8732e" stroke="#ffa042" stroke-width="2.500"/>
      <g clip-path="url(#clip-bore)">
        <path d="M1200 500h260v370h-260z" fill="url(#bore)"/>
        <ellipse rx="96" ry="161" transform="translate(1363.500 682) rotate(-16.800)" fill="#b86e00" stroke="#333"/>
        <g clip-path="url(#clip-step)">
          <path d="M1280 560h160v240h-160z" fill="url(#step)"/>
          <ellipse rx="62.500" ry="105" transform="translate(1373.500 679) rotate(-16.800)" fill="#c27500" stroke="#333"/>
          <g clip-path="url(#clip-lip)">
            <path d="M1320 560h160v240h-160z" fill="url(#step)"/>
            <ellipse rx="59" ry="99" transform="translate(1405.500 669.500) rotate(-16.800)" fill="#fff" stroke="#333"/>
          </g>
          <ellipse rx="59" ry="99" transform="translate(1397 672) rotate(-16.800)" fill="none" stroke="#333"/>
        </g>
        <ellipse rx="62.500" ry="105" transform="translate(1363 682) rotate(-16.800)" fill="none" stroke="#333"/>
      </g>
      <ellipse rx="96" ry="161" transform="translate(1332 691) rotate(-16.800)" fill="none" stroke="#ffa042" stroke-width="2.500"/>

      <!-- work coordinate system -->
      <g fill="none" stroke="#ccc" stroke-width="1.200">
        <path d="M1367.500 556l1 30M1389 610l32-9 2 64M1423 665l50-15M1423 665l42.500 14-40 12M1427 697l30 11"/>
      </g>
      <path d="M1368.500 586l3 94 52-15M1389 610l-20 6 38 13M1412.700 640l2 54 12-3M1371.700 680l55 17" fill="none" stroke="#1a1aee"/>
      <path d="M1367 546l-3 22 3 6 3-6z" fill="#a0a0a0"/>
      <path d="M1473 650l-13-2 1 6zM1457 708l-9-6-2 5z" fill="#d5d5d5" stroke="#aaa" stroke-width=".6"/>
      <path d="M1371.700 678l-3.700-38 1.500-13 3 13z" fill="#1f7a27"/>
      <path d="M1372 680l27-12 14-1-12 6z" fill="#d63434"/>
      <path d="M1372 680l19 5 15 7-15-2z" fill="#0a45e0"/>
      <path d="M1364 680h15M1371.700 673v15" stroke="#0000f0" stroke-width="1.600"/>
      <g class="wcs">
        <text x="1374" y="625" fill="#2b8a2b">YC</text>
        <text x="1397" y="663" fill="#d63434">XC</text>
        <text x="1390" y="706" fill="#1f4fe8">ZC</text>
        <text x="1475" y="652" fill="#ccc">X</text>
        <text x="1457" y="716" fill="#ccc">Z</text>
        <text x="1363" y="552" fill="#ccc">Y</text>
      </g>

      <!-- view triad -->
      <path d="M437 881l33-10 26 10-33 10zM437 881l2 40 26 10 32-10-1-40M463 891l2 40" fill="#fff" stroke="#aaa"/>
      <path d="M466 882l-1-30" stroke="#1f7a27" stroke-width="5"/><path d="M464 833l6 20q-5 3-10 0z" fill="#25802a"/>
      <path d="M497 892l16-5" stroke="#d63434" stroke-width="5"/><path d="M524 885l-14-1 2 9z" fill="#e04040"/>
      <path d="M481 906l20 7" stroke="#0a45e0" stroke-width="5" stroke-linecap="round"/><path d="M514 918l-12-9-4 8z" fill="#0a45e0"/>
      <g class="wcs">
        <text x="460" y="828" fill="#555">Y</text>
        <text x="527" y="887" fill="#d63434">X</text>
        <text x="515" y="924" fill="#1f4fe8">Z</text>
      </g>
    </svg>
  </section>

  <div class="minibar">
    <button aria-label="编辑参数"><svg><use href="#edit"/></svg></button>
    <button aria-label="删除"><svg class="del"><use href="#cross"/></svg></button>
  </div>

  <div class="menu" role="menu">
    <button class="more">显示/隐藏</button>
    <button><svg><use href="#show-p"/></svg>显示父项</button>
    <button><svg><use href="#hide-p"/></svg>隐藏父项</button>
    <hr>
    <button><svg><use href="#param"/></svg>编辑参数(<u>P</u>)...</button>
    <button><svg><use href="#edit"/></svg>可回滚编辑...</button>
    <button><svg><use href="#suppress"/></svg>抑制(<u>S</u>)</button>
    <button class="more">重排在前</button>
    <button class="more">重排在后</button>
    <button class="hot"><svg><use href="#group"/></svg>特征分组(<u>F</u>)</button>
    <button><svg><use href="#swap"/></svg>替换(<u>A</u>)...</button>
    <hr>
    <button class="more">过滤</button>
    <hr>
    <button><svg><use href="#copy"/></svg>复制(<u>C</u>)</button>
    <button><svg><use href="#cross"/></svg>删除(<u>D</u>)</button>
    <button><svg><use href="#sheet-info"/></svg>信息(<u>I</u>)</button>
    <hr>
    <button><svg><use href="#sheet-list"/></svg>属性(<u>I</u>)</button>
  </div>
</main>

<footer class="status">
  <span>选择对象并使用 MB3，或者双击某一对象</span>
  <span class="count">5 对象 已选定</span>
  <span></span>
</footer>

<div class="ime">
  <svg class="sogou" viewBox="0 0 32 30"><path d="M2 5L24 1q3 0 4 3l3 20q0 3-3 3L9 30q-3 0-4-3L1 8q0-3 1-3z" fill="#f4511e"/><path d="M23 8c-5-3-13-1-12 3 1 3 12 2 12 7 0 4-9 6-14 2" fill="none" stroke="#fff" stroke-width="4" stroke-linecap="round"/></svg>
  <b>英</b>
  <svg viewBox="0 0 16 16"><circle cx="4" cy="4" r="2"/><path d="M11 8h3v3l-2 4h-1l1-4h-1z"/></svg>
  <svg viewBox="0 0 16 16"><rect x="5" y="0" width="6" height="10" rx="3"/><path d="M3 7c0 7 10 7 10 0M8 12v4" fill="none" stroke="#0a6fd8" stroke-width="1.500"/></svg>
  <svg viewBox="0 0 16 16"><path d="M1 2h14v12H1z" fill="none" stroke="#0a6fd8" stroke-width="2"/><path d="M3 5h10M3 8h10M5 11h6" stroke="#0a6fd8" stroke-width="1.800" stroke-dasharray="2 1"/></svg>
  <svg viewBox="0 0 16 16"><path d="M0 4l4-2 3 2 3-2 5 2-2 4-2-1v8H4V7L1 8z" fill="#b06cf0"/><path d="M0 4l4-2 3 2v3H4L1 8z" fill="#e8706a"/><path d="M4 10h7v5H4z" fill="#5aa8ff"/><circle cx="14" cy="1.500" r="2.500" fill="#ff4a2e"/></svg>
  <svg viewBox="0 0 16 16"><path d="M2 3q6-3 12 0 3 6 1 11h-3l-2-3H6l-2 3H1Q-1 9 2 3z"/><path d="M4 7h4M6 5v4M11 6v2M10 7h3" stroke="#fff" stroke-width="1.300"/></svg>
  <svg viewBox="0 0 16 16"><rect x="1" y="1" width="6" height="7" rx="2"/><rect x="9" y="1" width="6" height="6" rx="3"/><rect x="1" y="10" width="6" height="5" rx="1"/><rect x="9" y="9" width="6" height="6" rx="2"/></svg>
  <svg viewBox="0 0 16 16"><path d="M8 0l2 3 4 0-1 4 3 2-3 2v3l-4 0-1 2-1-2-4 0v-3L0 9l3-2-1-4 4 0z"/><circle cx="8" cy="8.500" r="3" fill="#fff"/><path d="M7 7h2v4H7z"/></svg>
</div>
<div class="watermark">CSDN @山涧果子</div>

</body>
</html>
```
FILE: styles.css
```css
* {
    box-sizing: border-box;
}

html, body {
    height: 100%;
}

body {
    margin: 0;
    display: flex;
    flex-direction: column;
    overflow: hidden;
    position: relative;
    background-color: #fff;
    color: #1a1a1a;
    font-family: "Noto Sans", "Noto Sans CJK SC", sans-serif;
    font-size: 12px;
    line-height: 16px;
}

svg {
    width: 16px;
    height: 16px;
    flex: none;
    display: block;
}

.sprite {
    width: 0;
    height: 0;
}

button {
    font: inherit;
    color: inherit;
    background: none;
    border: 0;
    padding: 0;
    white-space: nowrap;
}

a {
    color: inherit;
    text-decoration: none;
    white-space: nowrap;
}

u {
    text-underline-offset: 2px;
}

/* small drop-down arrow */
.caret {
    width: 8px;
    height: 4px;
    flex: none;
    display: block;
    background-color: currentColor;
    clip-path: polygon(1px 0, 7px 0, 4px 3px);
}

.sep {
    width: 1px;
    flex: none;
}

/* title bar and tabs */
.top {
    color: #fff;
    background: linear-gradient(90deg, #00648a, #047aa6);
}

.titlebar {
    display: flex;
    height: 26px;
    align-items: center;
}

.quick {
    display: flex;
    align-items: center;
    gap: 7px;
    padding-left: 4px;
}

.logo {
    width: 32px;
    font-family: "Open Sans", sans-serif;
    font-weight: 800;
    font-size: 21px;
    line-height: 24px;
}

.quick .sep {
    height: 19px;
    margin: 0 -1px;
    background-color: #004c6c;
}

.quick .off {
    color: #3a8cab;
}

.flip svg {
    transform: scaleX(-1);
}

.win {
    display: flex;
    align-items: center;
    gap: 4px;
    font-size: 11px;
}

.caret.bar {
    height: 8px;
    clip-path: polygon(0 0, 8px 0, 8px 1px, 0 1px, 0 3px, 1px 3px, 4px 7px, 7px 3px, 0 3px);
}

.title {
    flex: 1;
    text-align: center;
}

.winctl {
    display: flex;
    align-items: center;
    gap: 15px;
    padding-right: 8px;
}

.winctl svg {
    width: 12px;
    height: 12px;
}

.brand {
    font-family: "Open Sans", sans-serif;
    font-weight: 800;
    font-size: 13px;
    margin-right: 12px;
}

.min {
    width: 8px;
    height: 10px;
    border-bottom: 2px solid #fff;
}

.tabs {
    display: flex;
    height: 30px;
    align-items: center;
    font-size: 13px;
}

.tabs a {
    height: 28px;
    padding: 4px 11px;
    line-height: 20px;
}

.tabs .file {
    padding: 4px 24px 4px 20px;
}

.tabs .on {
    color: #ffc845;
    border-bottom: 2px solid #ffc845;
}

.search {
    display: flex;
    align-items: center;
    width: 178px;
    height: 22px;
    margin-left: auto;
    padding-right: 2px;
    background-color: #fff;
    border: 1px solid #777;
}

.search input {
    flex: 1;
    min-width: 0;
    border: 0;
    padding: 0;
    font: inherit;
    font-size: 11px;
    background: none;
}

.search input::placeholder {
    color: #a0a0a0;
}

.tabtools {
    display: flex;
    gap: 10px;
    padding: 0 6px 0 10px;
}

/* ribbon */
.ribbon {
    display: flex;
    height: 94px;
    font-size: 11px;
    border-bottom: 1px solid #d8d8d8;
}

.group {
    display: flex;
    flex-direction: column;
    justify-content: space-between;
    margin: 5px 0 2px;
    border-right: 1px solid #d8d8d8;
}

.tools {
    display: flex;
    padding-left: 8px;
}

.datum {
    width: 109px;
}

.datum .tools {
    padding-left: 5px;
}

.big {
    display: flex;
    flex-direction: column;
    align-items: center;
    align-self: flex-start;
    width: 41px;
}

.big svg {
    width: 32px;
    height: 32px;
    margin-bottom: 4px;
}

.big .caret {
    margin-top: 4px;
}

.wide {
    width: 60px;
}

.slim {
    width: 32px;
}

.stack {
    display: flex;
    flex-direction: column;
    gap: 11px;
    padding: 4px 0 0 6px;
}

.stack + .stack {
    padding-left: 9px;
}

.stack button {
    display: flex;
    align-items: center;
    gap: 4px;
    height: 24px;
}

.stack svg {
    width: 24px;
    height: 24px;
}

.tools .more {
    margin: 0 2px 0 10px;
}

.foot {
    display: flex;
    align-items: center;
    padding-right: 7px;
}

.foot span {
    flex: 1;
    text-align: center;
    color: #00648a;
}

.caret.last {
    margin-left: auto;
    margin-right: 5px;
    align-self: flex-end;
    margin-bottom: 7px;
}

/* selection bar */
.selbar {
    display: flex;
    align-items: center;
    gap: 9px;
    height: 28px;
    font-size: 11px;
    border-bottom: 1px solid #a8a8a8;
}

.menubtn {
    display: flex;
    align-items: center;
    padding-left: 13px;
}

.menubtn svg {
    width: 12px;
    height: 12px;
    margin-right: 5px;
}

.menubtn .caret {
    margin-left: 5px;
}

.selbar .sep {
    height: 19px;
    background-color: #ccc;
}

.combo {
    display: grid;
    align-items: center;
    height: 22px;
}

.combo::after {
    content: "";
    grid-area: 1 / 1;
    justify-self: end;
    width: 8px;
    height: 4px;
    margin-right: 4px;
    background-color: #111;
    clip-path: polygon(0 0, 8px 0, 4px 4px);
    pointer-events: none;
}

.combo select {
    grid-area: 1 / 1;
    width: 100%;
    height: 22px;
    padding: 0 2px;
    font: inherit;
    color: inherit;
    background-color: #fff;
    border: 1px solid #666;
    border-radius: 0;
    appearance: none;
}

.type {
    width: 149px;
    margin-left: 1px;
}

.scope {
    width: 156px;
}

/* workspace */
.workspace {
    flex: 1;
    min-height: 0;
    display: flex;
    position: relative;
}

.rail {
    width: 37px;
    padding-left: 3px;
    background-color: #dcdcdc;
    border-right: 1px solid #a8a8a8;
}

.rail button {
    display: grid;
    place-items: center;
    width: 34px;
    height: 44px;
}

.rail svg {
    width: 24px;
    height: 24px;
}

.rail .gear {
    width: 30px;
    height: 32px;
}

.rail .gear svg {
    width: 16px;
    height: 16px;
}

.rail .on {
    background-color: #fff;
    border: 1px solid #a8a8a8;
    border-right: 0;
}

.navigator {
    width: 323px;
    display: flex;
    flex-direction: column;
    padding: 0 9px 5px 8px;
    border-right: 1px solid #a8a8a8;
}

.navhead {
    display: flex;
    align-items: center;
    height: 27px;
    margin-left: -2px;
    padding-bottom: 2px;
}

.navhead h2 {
    flex: 1;
    margin: 0 0 0 4px;
    font-size: 12px;
    font-weight: 500;
}

.navhead button {
    width: 12px;
    height: 11px;
    margin-right: 2px;
    border: 1px solid #000;
    border-top-width: 2px;
}

.treebox {
    flex: 1;
    min-height: 0;
    overflow: hidden;
    border: 1px solid #d0d0d0;
    border-bottom: 0;
}

.tree {
    width: 100%;
    table-layout: fixed;
    border-collapse: separate;
    border-spacing: 0;
}

.c-name {
    width: 196px;
}

.c-cur {
    width: 39px;
}

.c-new {
    width: 24px;
}

.tree th {
    height: 21px;
    padding: 2px 6px 0;
    text-align: left;
    font-weight: normal;
    white-space: nowrap;
    background-color: #efefef;
    border-right: 1px solid #d0d0d0;
    border-bottom: 1px solid #c8c8c8;
}

.asc {
    display: inline-block;
    width: 10px;
    height: 5px;
    margin: 0 0 2px 17px;
    background-color: #111;
    clip-path: polygon(0 100%, 50% 0, 100% 100%);
}

.tree td {
    height: 20px;
    padding: 0;
    border-right: 1px solid #e4e4e4;
    border-bottom: 1px solid #e4e4e4;
}

.tree th:last-child,
.tree td:last-child {
    border-right: 0;
}

.tree tbody tr:nth-child(even) td {
    background-color: #fafafa;
}

.tree td > svg {
    margin: 0 auto;
}

.node {
    display: flex;
    align-items: center;
    height: 19px;
    overflow: hidden;
}

.node .br {
    width: 19px;
    height: 20px;
}

.sub {
    padding-left: 19px;
}

.node span {
    flex: 1;
    padding-left: 3px;
    line-height: 19px;
    white-space: nowrap;
}

.tree .sel span,
.tree tbody .sel td:not(:first-child) {
    background-color: #cce5ea;
}

.dim span {
    color: #a0a0a0;
}

.cur span {
    font-weight: bold;
}

.hscroll {
    height: 17px;
    padding: 7px 60px 0 17px;
    background-color: #efefef;
    border: 1px solid #d0d0d0;
    border-top: 0;
}

.thumb {
    height: 2px;
    background-color: #888;
}

.splitter {
    height: 6px;
    margin: 2px 0 2px;
    background-color: #dcdcdc;
    border: 1px solid #a8a8a8;
}

.fold {
    display: flex;
    align-items: center;
    height: 24px;
    padding: 2px 10px 0;
    gap: 9px;
    font-size: 14px;
    color: #00648a;
    border-bottom: 2px solid #ccc;
}

.fold::before {
    content: "";
    width: 5px;
    height: 8px;
    background-color: #00648a;
    clip-path: polygon(0 0, 100% 50%, 0 100%);
}

/* graphics window */
.stage {
    flex: 1;
    min-width: 0;
    display: flex;
    flex-direction: column;
    border-right: 1px solid #ccc;
}

.doctabs {
    display: flex;
    height: 26px;
    border-bottom: 2px solid #00648a;
}

.doctab {
    display: flex;
    align-items: center;
    padding: 0 6px;
    color: #fff;
    background-color: #00648a;
}

.part {
    margin-right: 4px;
}

.doctab .x {
    width: 9px;
    height: 9px;
    margin-left: 8px;
}

.viewport {
    flex: 1;
    width: 100%;
    min-height: 0;
}

.wcs {
    font-family: "Liberation Sans", sans-serif;
    font-size: 13px;
}

/* floating menus over the tree */
.minibar {
    position: absolute;
    left: 231px;
    top: 204px;
    display: flex;
    align-items: center;
    gap: 10px;
    width: 70px;
    height: 38px;
    padding-left: 6px;
    background-color: #fff;
    border: 1px solid #a8a8a8;
}

.minibar svg {
    width: 24px;
    height: 24px;
}

.minibar .del {
    width: 20px;
    height: 20px;
}

.menu {
    position: absolute;
    left: 231px;
    top: 247px;
    width: 121px;
    display: flex;
    flex-direction: column;
    padding: 2px;
    font-size: 11px;
    background-color: #fff;
    border: 1px solid #a8a8a8;
}

.menu button {
    display: flex;
    align-items: center;
    height: 24px;
    padding-left: 26px;
}

.menu button svg {
    margin: 0 6px 0 -22px;
}

.menu hr {
    width: 95px;
    height: 1px;
    margin: 3px 0 5px 10px;
    border: 0;
    background-color: #d0d0d0;
}

.menu .more::after {
    content: "";
    width: 4px;
    height: 8px;
    margin: 0 6px 0 auto;
    background-color: #111;
    clip-path: polygon(0 0, 100% 50%, 0 100%);
}

.menu .hot {
    background-color: #daebef;
}

/* status line */
.status {
    display: grid;
    grid-template-columns: 1fr auto 1fr;
    height: 22px;
    padding: 2px 3px;
    font-size: 11px;
    font-weight: bold;
    border-top: 1px solid #a8a8a8;
}

.count {
    margin-left: 16px;
}

.ime {
    position: absolute;
    right: 540px;
    bottom: 0;
    display: flex;
    align-items: center;
    gap: 8px;
    height: 26px;
    padding-right: 4px;
    background-color: #fff;
    border: 1px solid #b4c8e4;
    fill: #0a6fd8;
    color: #0a6fd8;
    font-size: 15px;
}

.ime .sogou {
    width: 31px;
    height: 30px;
    margin: -4px -3px 0 -9px;
}

.watermark {
    position: absolute;
    right: 5px;
    bottom: 9px;
    font-size: 37px;
    line-height: 44px;
    color: #e0e0e0;
    text-shadow: 1px 1px 1px #888;
    white-space: nowrap;
}
```
